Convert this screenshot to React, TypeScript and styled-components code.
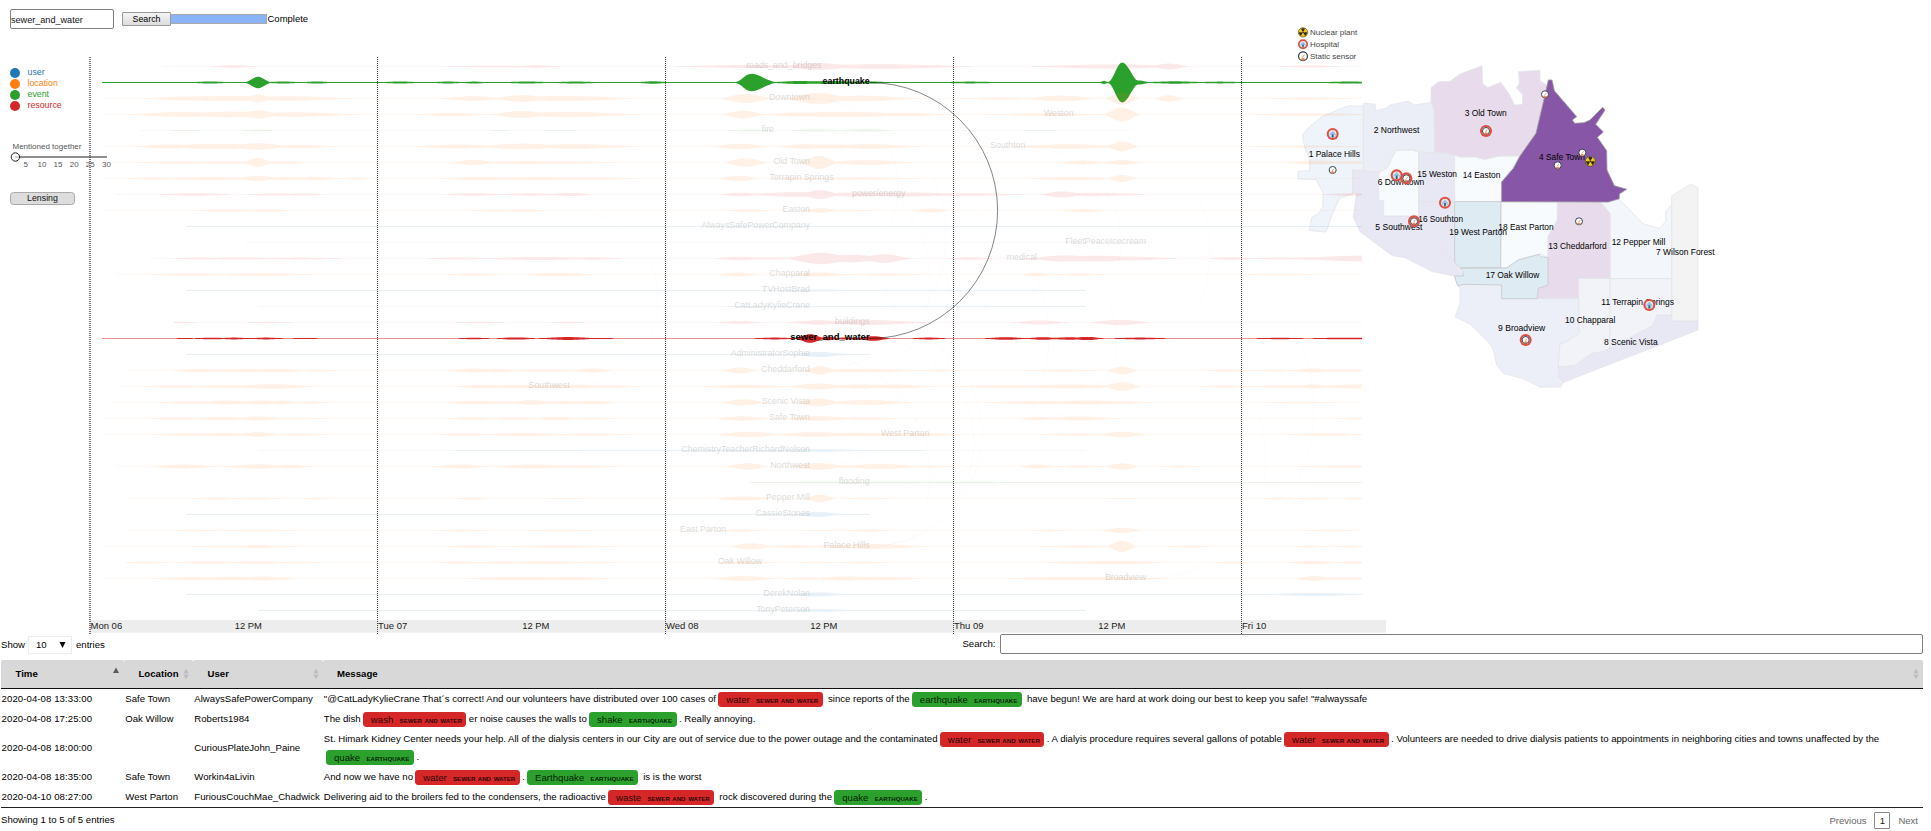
import React from "react";
import styled, { createGlobalStyle } from "styled-components";

const USER = "#1f77b4";
const LOCATION = "#ff7f0e";
const EVENT = "#2ca02c";
const RESOURCE = "#d62728";

const GlobalStyle = createGlobalStyle`
  * { box-sizing: border-box; }
  body {
    margin: 0;
    background: #fff;
    color: #000;
    font: 9.6px/1.2 "Liberation Sans", Arial, sans-serif;
    overflow: hidden;
  }
`;

const Page = styled.div`
  width: 1931px;
  height: 831px;
  display: flex;
  flex-direction: column;
`;

/* ---------- top bar ---------- */

const TopBar = styled.header`
  height: 32px;
  flex: none;
  display: flex;
  align-items: center;
  padding: 6px 0 0 10px;
`;

const QueryInput = styled.input`
  width: 104px;
  height: 20px;
  padding: 2px 0 0;
  border: 1px solid #808080;
  border-radius: 2px;
  font: 9.1px "Liberation Sans", Arial, sans-serif;
  color: #111;
`;

const SearchButton = styled.button`
  width: 49px;
  height: 14px;
  margin-left: 8px;
  padding: 0;
  border: 1px solid #999;
  border-radius: 1px;
  background: linear-gradient(#f4f4f4, #dcdcdc);
  font: 8.8px/10px "Liberation Sans", Arial, sans-serif;
  color: #000;
`;

const Progress = styled.div`
  width: 96px;
  height: 10px;
  border: 1px solid #a9a9a9;
  border-left: 0;
  background: #8ab3f8;
`;

const Status = styled.span`
  font-size: 9.5px;
  margin-left: 0.5px;
`;

/* ---------- stage ---------- */

const Stage = styled.main`
  height: 602px;
  flex: none;
  display: flex;
  align-items: flex-start;
`;

const Sidebar = styled.aside`
  width: 84px;
  flex: none;
  padding: 35px 0 0 10px;
  display: flex;
  flex-direction: column;
  align-items: flex-start;
  position: relative;
  z-index: 2;
`;

const Legend = styled.ul`
  margin: 0;
  padding: 0;
  list-style: none;
`;

const LegendItem = styled.li<{ $color: string }>`
  display: flex;
  align-items: center;
  height: 11.15px;
  color: ${(p) => p.$color};
  font-size: 8.8px;
  line-height: 10px;
  span { margin-top: -2px; }
  &::before {
    content: "";
    width: 10px;
    height: 10px;
    margin-right: 7.5px;
    border-radius: 50%;
    background: ${(p) => p.$color};
  }
`;

const SliderTitle = styled.div`
  margin: 30px 0 0 2.5px;
  font-size: 8px;
  line-height: 9px;
  color: #555;
  white-space: nowrap;
`;

const SliderSvg = styled.svg`
  display: block;
  width: 104px;
  height: 20px;
`;

const LensingButton = styled.button`
  width: 65px;
  height: 13px;
  margin-top: 21px;
  padding: 0;
  border: 1px solid #aaa;
  border-radius: 3.5px;
  background: #ddd;
  font: 8.8px/10px "Liberation Sans", Arial, sans-serif;
  color: #111;
`;

const ChartSvg = styled.svg`
  display: block;
  flex: none;
  width: 1306px;
  height: 602px;
  position: relative;
  z-index: 1;
  font-size: 8.8px;
`;

const MapSvg = styled.svg`
  display: block;
  flex: none;
  width: 440px;
  height: 380px;
  margin: -12px 0 0 -110px;
  font-size: 25.6px;
`;

/* ---------- streams ---------- */

// [centre, half width left, half width right, amplitude]
type Bump = [number, number, number, number];
type Row = {
  name: string;
  kind: string;
  right: number;
  from: number;
  to: number;
  base?: number;
  labelWidth?: number;
  bumps: Bump[];
};

const b = (c: number, w: number, a: number): Bump => [c, w, w, a];

const rows: Row[] = [
  { name: "roads_and_bridges", kind: RESOURCE, right: 821.5, from: 162, to: 1362, bumps: [b(234, 14, 1), b(500, 40, 0.5), b(536, 16, 0.9), b(750, 50, 1.2), b(818, 40, 3), b(880, 60, 2), b(1110, 50, 1.8), b(1169, 12, 2.6), b(1310, 20, 0.8)] },
  { name: "earthquake", kind: EVENT, right: 869.6, labelWidth: 47, from: 102, to: 1362, base: 0.5, bumps: [b(210, 20, 0.5), b(258, 13, 5.2), b(283, 16, 0.6), b(317, 16, 0.5), b(400, 20, 0.5), b(448, 16, 0.5), b(474, 12, 0.5), b(527, 24, 0.5), b(576, 24, 0.5), b(653, 16, 0.7), [751, 16, 26, 8.2], b(800, 30, 1), b(830, 40, 1), b(870, 20, 0.5), b(970, 30, 0.4), b(1104, 4, 1.2), [1122, 14, 18, 19.5], b(1138, 12, 1.6), b(1175, 30, 0.7), b(1220, 24, 0.4), b(1350, 30, 0.5)] },
  { name: "Downtown", kind: LOCATION, right: 810, from: 102, to: 1362, bumps: [b(190, 30, 1.8), b(230, 50, 2.3), b(258, 14, 3.8), b(290, 40, 1.9), b(318, 16, 1), b(474, 22, 2), b(522, 30, 3), b(565, 40, 2.2), b(595, 22, 1.6), b(746, 24, 4.2), b(818, 32, 5.2), b(862, 36, 2.6), b(1000, 30, 0.8), b(1061, 24, 2.6), b(1122, 15, 5.8), b(1169, 14, 3), b(1310, 30, 0.7)] },
  { name: "Weston", kind: LOCATION, right: 1073.6, from: 102, to: 1362, bumps: [b(182, 34, 2.2), b(230, 40, 2.6), b(258, 20, 3.8), b(295, 40, 1.9), b(452, 22, 1.4), b(522, 30, 3.2), b(570, 40, 2.5), b(610, 20, 0.8), b(743, 20, 3.6), b(800, 25, 1.8), b(845, 50, 2.3), b(900, 30, 1.5), b(1045, 40, 1), b(1122, 17, 6.6), b(1310, 40, 1)] },
  { name: "fire", kind: EVENT, right: 774, from: 140, to: 1130, base: 0.1, bumps: [b(186, 20, 0.3), b(258, 14, 0.5), b(500, 20, 0.2), b(560, 20, 0.3), b(750, 20, 0.5), b(818, 20, 0.8), b(865, 20, 1), b(1040, 20, 0.3)] },
  { name: "Southton", kind: LOCATION, right: 1025.4, from: 102, to: 1362, bumps: [b(170, 24, 1.8), b(215, 40, 2.3), b(258, 30, 3), b(300, 24, 1.4), b(458, 30, 1.7), b(522, 30, 2.6), b(575, 40, 2), b(740, 18, 2.5), b(805, 20, 2), b(830, 30, 1.8), b(870, 34, 2), b(1070, 36, 2), b(1122, 15, 4.8), b(1305, 40, 0.6)] },
  { name: "Old Town", kind: LOCATION, right: 810, from: 102, to: 1362, bumps: [b(180, 30, 0.8), b(225, 30, 0.9), b(258, 14, 4.2), b(285, 14, 1), b(474, 14, 2.2), b(525, 30, 1.2), b(570, 30, 0.8), b(746, 20, 4), b(819, 18, 6.2), b(868, 30, 2), b(1083, 16, 1.6), b(1122, 14, 2), b(1315, 20, 1.8), b(1350, 14, 1)] },
  { name: "Terrapin Springs", kind: LOCATION, right: 833.6, from: 102, to: 1362, bumps: [b(155, 20, 0.8), b(210, 36, 1.2), b(258, 14, 2.2), b(285, 20, 1.2), b(317, 14, 1.4), b(355, 12, 0.7), b(480, 26, 1.4), b(540, 40, 1.2), b(595, 30, 0.9), b(739, 14, 2.3), b(800, 20, 0.8), b(862, 40, 0.8), b(1072, 28, 1.4), b(1122, 14, 3.2)] },
  { name: "power/energy", kind: RESOURCE, right: 905.4, from: 115, to: 1362, bumps: [b(194, 24, 1), b(274, 20, 0.7), b(303, 14, 0.8), b(474, 20, 1), b(530, 20, 0.9), b(570, 14, 1.3), b(740, 14, 1.5), b(795, 34, 2), b(820, 20, 4), b(860, 36, 1.8), b(900, 50, 1.8), b(965, 40, 1), b(1062, 20, 2.8), b(1092, 30, 1.4), b(1122, 16, 0.8), b(1350, 16, 1)] },
  { name: "Easton", kind: LOCATION, right: 810, from: 102, to: 1362, base: 0.15, bumps: [b(228, 24, 1), b(269, 14, 1), b(495, 20, 0.7), b(523, 14, 1.1), b(747, 14, 1.1), b(821, 12, 2), b(850, 20, 0.5), b(931, 13, 1.8), b(1083, 16, 1.2)] },
  { name: "AlwaysSafePowerCompany", kind: USER, right: 810, from: 186, to: 1362, base: 0.5, bumps: [] },
  { name: "FleetPeaceIcecream", kind: USER, right: 1146, from: 246, to: 1146, base: 0.25, bumps: [] },
  { name: "medical", kind: RESOURCE, right: 1037, from: 150, to: 1362, bumps: [b(200, 18, 0.7), b(240, 30, 0.8), b(300, 30, 0.6), b(458, 20, 0.8), b(540, 40, 1.2), b(593, 20, 0.9), b(740, 16, 1.5), b(770, 20, 0.8), b(821, 34, 5.4), b(852, 36, 3.4), b(884, 26, 4), b(970, 14, 1), b(1065, 36, 2.8), b(1096, 36, 2.6), b(1130, 30, 1.6), b(1231, 14, 1), b(1280, 20, 0.7), b(1315, 20, 1), [1362, 45, 20, 2.6]] },
  { name: "Chapparal", kind: LOCATION, right: 810, from: 115, to: 1362, base: 0.15, bumps: [b(190, 30, 1), b(258, 40, 1), b(474, 20, 0.9), b(558, 24, 1.6), b(739, 14, 1.7), b(818, 20, 1.8), b(885, 30, 0.8), b(1036, 10, 1.5), b(1080, 20, 0.8), b(1280, 30, 0.6)] },
  { name: "TVHostBrad", kind: USER, right: 810, from: 186, to: 1086, base: 0.3, bumps: [b(818, 18, 0.7), b(960, 130, 0.3)] },
  { name: "CatLadyKylieCrane", kind: USER, right: 810, from: 258, to: 1086, base: 0.25, bumps: [b(940, 150, 0.3)] },
  { name: "buildings", kind: RESOURCE, right: 869.6, from: 174, to: 1362, base: 0.15, bumps: [b(178, 14, 0.5), b(270, 20, 0.4), b(480, 20, 0.5), b(567, 14, 0.5), b(740, 16, 1), b(818, 20, 2), b(868, 40, 2.2), b(1040, 18, 1.8), b(1120, 20, 2.3)] },
  { name: "sewer_and_water", kind: RESOURCE, right: 869.6, labelWidth: 79.3, from: 102, to: 1362, base: 0.32, bumps: [b(185, 10, 0.3), b(212, 22, 0.5), b(234, 18, 0.6), b(266, 20, 0.6), b(305, 16, 0.3), b(474, 18, 0.5), b(516, 22, 0.8), b(568, 34, 1.1), b(605, 10, 0.3), b(775, 26, 0.6), b(810, 16, 4), b(828, 12, 1.4), b(850, 24, 0.8), b(873, 18, 2), b(929, 20, 0.6), b(1006, 24, 1), b(1043, 18, 1), b(1070, 26, 0.9), b(1087, 18, 1.3), b(1140, 30, 0.6), b(1280, 30, 0.4), b(1345, 40, 0.5)] },
  { name: "AdministratorSophie", kind: USER, right: 810, from: 186, to: 870, base: 0.5, bumps: [b(820, 16, 2)] },
  { name: "Cheddarford", kind: LOCATION, right: 810, from: 126, to: 1362, base: 0.15, bumps: [b(198, 20, 1.3), b(245, 34, 1.2), b(275, 22, 1.6), b(317, 14, 0.8), b(474, 20, 1.7), b(499, 14, 1.6), b(545, 30, 1), b(593, 14, 1.7), b(740, 18, 2.8), b(820, 16, 4), b(860, 44, 1.4), b(940, 16, 0.7), b(1060, 30, 0.7), b(1122, 14, 4), b(1228, 16, 0.9), b(1275, 20, 0.7), b(1314, 14, 1.8), b(1345, 20, 0.9)] },
  { name: "Southwest", kind: LOCATION, right: 569.6, from: 118, to: 1362, base: 0.15, bumps: [b(175, 22, 1), b(225, 30, 1.1), b(271, 30, 2), b(485, 20, 1.5), b(515, 30, 1.4), b(570, 40, 1.6), b(615, 16, 1), b(745, 30, 1.5), b(818, 28, 2.8), b(860, 34, 1.7), b(895, 26, 1.7), b(1010, 40, 1.1), b(1070, 40, 1.8), b(1122, 18, 4), b(1225, 18, 0.8), b(1290, 30, 1), b(1314, 14, 1.8), [1362, 40, 9, 1.9]] },
  { name: "Scenic Vista", kind: LOCATION, right: 810, from: 112, to: 1362, base: 0.15, bumps: [b(190, 24, 1), b(226, 18, 1.7), b(262, 16, 1.8), b(281, 12, 1.7), b(310, 14, 0.8), b(474, 20, 1.6), b(500, 20, 1), b(531, 18, 2), b(565, 16, 1.2), b(593, 18, 1.5), b(743, 22, 2.9), b(818, 22, 3.8), b(868, 30, 2.2), b(1040, 40, 1.3), b(1090, 40, 1.7), b(1125, 20, 1), b(1300, 30, 0.5)] },
  { name: "Safe Town", kind: LOCATION, right: 810, from: 102, to: 1362, base: 0.15, bumps: [b(175, 20, 1), b(222, 24, 1.4), b(258, 20, 1.8), b(300, 20, 0.6), b(474, 20, 1.1), b(515, 20, 1), b(556, 16, 1.6), b(590, 20, 0.7), b(742, 18, 1.9), b(819, 26, 2), b(868, 22, 1.1), b(1037, 12, 1.5), b(1079, 26, 1.8), b(1355, 12, 0.8)] },
  { name: "West Parton", kind: LOCATION, right: 929.3, from: 102, to: 1362, base: 0.15, bumps: [b(185, 24, 1), b(225, 24, 1.3), b(258, 16, 2), b(300, 20, 0.8), b(465, 20, 0.9), b(525, 30, 1.4), b(590, 30, 0.8), b(749, 22, 2.5), b(815, 30, 2.1), b(860, 40, 1.6), b(920, 30, 1.3), b(1075, 26, 0.9), b(1122, 16, 2.5), b(1325, 30, 1)] },
  { name: "ChemistryTeacherRichardNelson", kind: USER, right: 810, from: 258, to: 1086, base: 0.25, bumps: [b(690, 160, 0.4), b(818, 30, 1)] },
  { name: "Northwest", kind: LOCATION, right: 810, from: 115, to: 1362, base: 0.15, bumps: [b(182, 24, 1.7), b(258, 24, 1.9), b(291, 14, 1.6), b(461, 18, 1.8), b(535, 30, 1.8), b(580, 30, 1), b(747, 20, 3), b(818, 26, 3.2), b(880, 28, 2.4), b(845, 30, 1), b(930, 20, 0.7), b(1037, 12, 1.8), b(1080, 20, 0.8), b(1122, 16, 3), b(1180, 14, 0.7), b(1350, 40, 0.8)] },
  { name: "flooding", kind: EVENT, right: 869.6, from: 750, to: 1362, base: 0.3, bumps: [b(822, 26, 0.4), b(930, 90, 0.35)] },
  { name: "Pepper Mill", kind: LOCATION, right: 810, from: 126, to: 1362, base: 0.12, bumps: [b(218, 20, 0.8), b(258, 20, 0.8), b(317, 12, 0.7), b(474, 14, 0.9), b(565, 18, 0.4), b(743, 20, 1.9), b(820, 15, 3.6), b(868, 20, 0.5), b(1122, 16, 0.4), b(1278, 12, 0.8), b(1314, 14, 0.8), b(1355, 10, 0.8)] },
  { name: "CassieStones", kind: USER, right: 810, from: 186, to: 870, base: 0.5, bumps: [b(818, 14, 1.8)] },
  { name: "East Parton", kind: LOCATION, right: 726, from: 126, to: 1362, base: 0.12, bumps: [b(195, 20, 0.5), b(258, 30, 0.6), b(460, 20, 0.7), b(560, 30, 0.5), b(740, 16, 0.9), b(818, 16, 0.4), b(868, 18, 0.8), b(1050, 14, 0.7), b(1122, 15, 2.4), b(1330, 20, 0.6)] },
  { name: "Palace Hills", kind: LOCATION, right: 869.6, from: 102, to: 1362, base: 0.14, bumps: [b(225, 30, 0.6), b(258, 16, 1.4), b(280, 16, 0.5), b(474, 20, 1), b(560, 40, 0.9), b(751, 22, 2.8), b(795, 20, 1.3), b(835, 20, 1), b(872, 36, 2.2), b(900, 18, 0.8), b(1080, 30, 0.8), b(1122, 14, 5.4), b(1190, 16, 0.8), b(1310, 14, 0.7), b(1350, 14, 0.7)] },
  { name: "Oak Willow", kind: LOCATION, right: 762, from: 126, to: 1362, base: 0.14, bumps: [b(145, 16, 0.7), b(208, 24, 1), b(260, 20, 1.1), b(300, 20, 0.6), b(460, 18, 0.9), b(500, 14, 1), b(545, 30, 1.1), b(595, 16, 0.6), b(745, 20, 1.2), b(818, 16, 0.5), b(862, 18, 0.7), b(1070, 20, 0.8), b(1115, 34, 1.5), b(1232, 14, 0.8), b(1314, 18, 1.4), b(1355, 12, 0.9)] },
  { name: "Broadview", kind: LOCATION, right: 1146, from: 102, to: 1362, base: 0.14, bumps: [b(190, 26, 1.3), b(230, 30, 1.6), b(262, 18, 1.8), b(283, 10, 1.2), b(510, 30, 1.5), b(535, 24, 1.4), b(572, 26, 1.4), b(743, 22, 2.2), b(805, 18, 0.9), b(845, 24, 1.8), b(880, 28, 1.5), b(1065, 40, 1.4), b(1110, 40, 1.6), b(1314, 12, 2.3), b(1338, 12, 1), b(1357, 10, 0.9)] },
  { name: "DerekNolan", kind: USER, right: 810, from: 186, to: 1362, base: 0.4, bumps: [b(818, 16, 1.6), b(1314, 30, 1)] },
  { name: "TonyPeterson", kind: USER, right: 810, from: 258, to: 1086, base: 0.4, bumps: [b(818, 20, 0.9)] },
];

const highlighted = new Set(["earthquake", "sewer_and_water"]);

const FIRST_ROW = 66.5;
const ROW_STEP = 16;
const rowY = (i: number) => FIRST_ROW + i * ROW_STEP;

function streamPath(row: Row, y: number) {
  const solid = highlighted.has(row.name);
  const base = (row.base ?? 0.2) + (solid ? 0 : 0.1);
  const xs: number[] = [];
  for (let x = row.from; x < row.to; x += 2) xs.push(x);
  xs.push(row.to);
  const half = xs.map((x) => {
    let peak = 0;
    for (const [c, l, r, a] of row.bumps) {
      // low swells spread out into their neighbours, tall peaks stay narrow
      const spread = solid ? 1 : a < 2.7 ? 1.75 : 1.2;
      const w = (x < c ? l : r) * spread;
      const t = Math.abs(x - c) / w;
      if (t < 1) peak = Math.max(peak, a * 0.5 * (1 + Math.cos(Math.PI * t)));
    }
    return base + peak;
  });
  const upper = xs.map((x, i) => `${x},${(y - half[i]).toFixed(2)}`);
  const lower = xs.map((x, i) => `${x},${(y + half[i]).toFixed(2)}`).reverse();
  return `M${upper.join("L")}L${lower.join("L")}Z`;
}

const days = [
  { x: 90, label: "Mon 06" },
  { x: 377.5, label: "Tue 07" },
  { x: 665.5, label: "Wed 08" },
  { x: 953.5, label: "Thu 09" },
  { x: 1241.5, label: "Fri 10" },
];

// [x, first row, last row] of the links between entities mentioned together
const faintLinks: [number, number, number][] = [
  [810, 2, 13], [810, 2, 19], [810, 6, 21], [810, 7, 25], [870, 16, 30], [834, 7, 22],
  [905, 8, 26], [1037, 12, 22], [1074, 3, 20], [1146, 11, 32], [570, 9, 20], [1025, 5, 17],
  [810, 18, 33], [870, 17, 30], [1146, 17, 32],
];

function StreamChart() {
  return (
    <ChartSvg viewBox="84 32 1306 602">
      <rect x={90} y={620} width={1296} height={12.6} fill="#ededed" />
      {days.map((d, i) => (
        <line key={d.label} x1={d.x} x2={d.x} y1={57} y2={634} stroke={i ? "#444" : "#777"} strokeWidth={i ? 1 : 2} strokeDasharray="1 1" />
      ))}
      {faintLinks.map(([x, from, to], i) => {
        const r = ((to - from) * ROW_STEP) / 2;
        return <path key={i} d={`M${x},${rowY(from)}A${r},${r} 0 0 1 ${x},${rowY(to)}`} fill="none" stroke="#000" opacity={0.014} />;
      })}
      {rows.map((row, i) => (
        <path key={row.name} d={streamPath(row, rowY(i))} fill={row.kind} opacity={highlighted.has(row.name) ? 1 : 0.105} />
      ))}
      <path d="M869.6,82.5A128,128 0 0 1 869.6,338.5" fill="none" stroke="#000" strokeOpacity={0.48} />
      {rows.map((row, i) => {
        const on = highlighted.has(row.name);
        const label = row.labelWidth
          ? { x: row.right - row.labelWidth, textLength: row.labelWidth, lengthAdjust: "spacingAndGlyphs" as const }
          : { x: row.right, textAnchor: "end" as const };
        return (
          <text key={row.name} {...label} y={rowY(i) + 1.6} fontWeight={on ? 700 : 400} fill="#000" opacity={on ? 1 : 0.14}>
            {row.name}
          </text>
        );
      })}
      <g fontSize={9.5} fill="#222">
        {days.map((d) => (
          <text key={d.label} x={d.x + 0.5} y={629}>{d.label}</text>
        ))}
        {days.slice(0, 4).map((d) => (
          <text key={d.label} x={d.x + 144.7} y={629} fontSize={9.4}>12 PM</text>
        ))}
      </g>
    </ChartSvg>
  );
}

/* ---------- map ---------- */

const districts: { fill: string; points: string; stroke?: string }[] = [
  { fill: "#eff3fa", points: "250,258 205,258 185,265 125,290 88,320 67,345 75,385 90,420 88,453 54,453 54,477 108,479 130,520 128,560 116,580 95,592 88,632 138,636 158,580 178,535 218,522 218,450 250,450" },
  { fill: "#ebeef7", points: "250,258 252,250 285,252 287,272 318,265 330,255 385,243 402,255 455,247 462,270 464,397 430,397 395,390 350,392 340,405 332,430 305,457 250,455" },
  { fill: "#e8e7f4", points: "218,450 305,457 296,460 296,540 311,542 311,588 416,588 430,615 524,727 550,768 523,768 458,755 375,713 337,707 240,635 220,590 230,520 218,518" },
  { fill: "#f7fbfd", points: "340,405 350,392 395,390 416,397 416,588 311,588 311,542 296,540 296,460 325,440" },
  { fill: "#e8e7f4", points: "416,398 464,398 524,403 524,545 416,545" },
  { fill: "#e8e7f4", points: "416,545 524,545 524,727 430,615 416,590" },
  { fill: "#e8dcec", points: "453,203 476,185 510,184 540,162 606,137 608,190 623,203 662,187 686,220 704,255 728,253 728,225 710,203 718,190 716,155 780,151 780,182 800,195 795,225 768,340 718,408 655,409 614,419 585,411 540,412 500,400 464,397 462,270 453,245" },
  { fill: "#f7fbfd", points: "524,405 540,412 585,411 614,419 655,409 720,408 665,486 663,545 524,545" },
  { fill: "#f3f3f3", points: "1175,528 1232,492 1254,503 1254,903 1175,903" },
  { fill: "#f3f6fb", points: "962,546 1018,538 1090,612 1138,625 1157,605 1157,575 1175,553 1175,776 990,776 990,580" },
  { fill: "#f7fbfd", points: "665,546 832,546 832,600 804,650 804,713 780,702 715,718 680,743 662,743" },
  { fill: "#e8dcec", points: "832,546 960,546 990,580 990,776 896,776 896,836 772,836 775,805 804,795 804,650 832,600" },
  { fill: "#eceff8", points: "523,768 533,797 552,791 665,795 665,836 896,836 897,940 865,962 840,972 835,1040 850,1087 842,1101 780,1101 735,1078 670,1060 650,1035 640,990 630,972 570,912 525,890 540,850 540,810" },
  { fill: "#e8e7f4", points: "835,1040 883,1037 935,1000 965,995 1120,915 1130,885 1175,885 1175,903 1254,903 1254,930 850,1087 835,1070" },
  { fill: "#f1f3f9", points: "896,776 990,776 990,985 965,995 935,1000 883,1037 835,1040 840,972 865,962 897,940" },
  { fill: "#f1f3f9", points: "990,776 1175,776 1175,885 1130,885 1120,915 990,985" },
  { fill: "#dfebf3", stroke: "#c4c8cc", points: "524,545 662,545 662,743 540,743 524,727" },
  { fill: "#dfebf3", stroke: "#c4c8cc", points: "540,745 680,744 715,720 778,703 782,710 804,713 804,795 775,805 772,836 665,836 665,795 552,793 533,797 523,768 550,768 548,755" },
  { fill: "#8856a7", stroke: "#999", points: "805,180 816,180 823,212 890,290 877,300 884,310 912,308 930,300 968,262 975,270 947,313 970,336 952,352 980,392 981,450 1003,497 1040,508 1018,522 1018,536 985,546 665,545 665,486 700,445 720,408 768,340 795,225" },
];

// [name, left, baseline, right]
const districtLabels: [string, number, number, number][] = [
  ["1 Palace Hills", 86, 411, 240],
  ["2 Northwest", 281, 339, 418],
  ["3 Old Town", 554, 288, 680],
  ["4 Safe Town", 777, 420, 915],
  ["5 Southwest", 286, 630, 427],
  ["6 Downtown", 293, 495, 433],
  ["7 Wilson Forest", 1128, 705, 1304],
  ["8 Scenic Vista", 972, 975, 1133],
  ["9 Broadview", 654, 933, 796],
  ["10 Chapparal", 855, 909, 1006],
  ["11 Terrapin Springs", 964, 855, 1182],
  ["12 Pepper Mill", 995, 675, 1156],
  ["13 Cheddarford", 805, 687, 980],
  ["14 Easton", 548, 474, 661],
  ["15 Weston", 412, 471, 531],
  ["16 Southton", 415, 606, 549],
  ["17 Oak Willow", 617, 774, 778],
  ["18 East Parton", 655, 630, 821],
  ["19 West Parton", 508, 645, 681],
];

const Hospital = ({ x, y, r = 18 }: { x: number; y: number; r?: number }) => (
  <g transform={`translate(${x} ${y}) scale(${r / 18})`}>
    <circle r={18} fill="#dd4f40" />
    <circle r={11.8} fill="#e4e6ea" />
    <path d="M-9,0 L0,-9 L9,0 V8 H-9Z" fill="#8cc3e6" />
    <path d="M-2.6,1 H2.6 V11 H-2.6Z" fill="#4a5c70" />
    <path d="M-7,2 H-4 V7 H-7Z M4,2 H7 V7 H4Z" fill="#e6f1f8" />
  </g>
);

const Sensor = ({ x, y, r = 12 }: { x: number; y: number; r?: number }) => (
  <g transform={`translate(${x} ${y}) scale(${r / 12})`}>
    <circle r={10.6} fill="#fff" stroke="#2f3d48" strokeWidth={2.8} />
    <path d="M-6,7.5 A9,9 0 0 0 6,7.5 L2,4 H-2Z" fill="#f0895c" />
    <path d="M-2,3 L4,-4" stroke="#e8764a" strokeWidth={2.2} />
  </g>
);

const Nuclear = ({ x, y, r = 16 }: { x: number; y: number; r?: number }) => (
  <g transform={`translate(${x} ${y}) scale(${r / 16})`}>
    <circle r={15} fill="#f4c820" stroke="#4a4020" strokeWidth={2} />
    {[60, 180, 300].map((a) => (
      <path key={a} transform={`rotate(${a})`} d="M0,0 L-6.5,11.5 A13,13 0 0 0 6.5,11.5Z" fill="#2c2818" />
    ))}
    <circle r={3.4} fill="#2c2818" stroke="#f4c820" strokeWidth={1.4} />
  </g>
);

const hospitals = [[158, 342], [618, 333], [350, 466], [379, 475], [495, 548], [402, 604], [1108, 855], [737, 960]];
const sensors = [[158, 450], [618, 333], [795, 223], [907, 398], [833, 436], [897, 604], [379, 475], [402, 604], [737, 960]];

function CityMap() {
  return (
    <MapSvg viewBox="0 0 1320 1140">
      {districts.map((d, i) => (
        <polygon key={i} points={d.points} fill={d.fill} stroke={d.stroke ?? "#e3e4ea"} strokeWidth={2.4} strokeLinejoin="round" />
      ))}
      {districtLabels.map(([name, x, y, right]) => (
        <text key={name} x={x} y={y} textLength={right - x} lengthAdjust="spacingAndGlyphs">{name}</text>
      ))}
      {hospitals.map(([x, y]) => <Hospital key={`${x}`} x={x} y={y} />)}
      {sensors.map(([x, y]) => <Sensor key={`${x}-${y}`} x={x} y={y} />)}
      <Nuclear x={931} y={424} />
      <Nuclear x={69} y={37} r={15} />
      <Hospital x={69} y={73} r={15} />
      <Sensor x={69} y={109} r={15} />
      <g fontSize={24} fill="#444">
        <text x={90} y={45}>Nuclear plant</text>
        <text x={90} y={81}>Hospital</text>
        <text x={90} y={117}>Static sensor</text>
      </g>
    </MapSvg>
  );
}

/* ---------- messages table ---------- */

const Controls = styled.div`
  height: 26px;
  flex: none;
  display: flex;
  align-items: flex-start;
  justify-content: space-between;
  padding: 0 8px 0 1px;
`;

const LengthControl = styled.label`
  display: flex;
  align-items: center;
  margin-top: 2px;
`;

const LengthSelect = styled.span`
  width: 44px;
  height: 18px;
  margin: 0 4px 0 3px;
  padding: 0 5px 0 7px;
  border: 1px solid #eee;
  display: flex;
  align-items: center;
  justify-content: space-between;
`;

const FilterControl = styled.label`
  display: flex;
  align-items: center;
  gap: 4.5px;
`;

const FilterInput = styled.input`
  width: 923px;
  height: 20px;
  padding: 0 4px;
  border: 1px solid #808080;
  border-radius: 2px;
`;

const Table = styled.table`
  width: 1922px;
  margin-left: 1px;
  table-layout: fixed;
  border-collapse: separate;
  border-spacing: 0;
  border-bottom: 1px solid #222;
  font-size: 9.62px;
`;

const HeadCell = styled.th`
  height: 29px;
  padding: 0 0 0 14.5px;
  text-align: left;
  background: #d8d8d8;
  border-bottom: 1px solid #111;
  border-radius: 2px 2px 0 0;
`;

const HeadInner = styled.div`
  display: flex;
  align-items: center;
  justify-content: space-between;
  padding-right: 4px;
`;

const Cell = styled.td`
  padding: 1px 0 1px 1.3px;
  line-height: 18px;
  height: 20px;
  vertical-align: middle;
  white-space: nowrap;
`;

const TimeCell = styled(Cell)`
  padding-left: 0.6px;
  letter-spacing: 0.07px;
`;

const MessageCell = styled(Cell)`
  white-space: normal;
`;

const Entity = styled.mark<{ $color: string }>`
  display: inline-flex;
  align-items: center;
  height: 15px;
  margin: 0 2.4px;
  padding: 0 4.6px 0 7.8px;
  border-radius: 3.4px;
  background: ${(p) => p.$color};
  color: rgba(0, 0, 0, 0.85);
  line-height: 15px;
  vertical-align: middle;
`;

const EntityTag = styled.b`
  margin-left: 6.3px;
  padding-top: 2px;
  font-size: 6.1px;
  word-spacing: 1px;
  text-transform: uppercase;
  white-space: nowrap;
`;

const Water = ({ children }: { children: React.ReactNode }) => (
  <Entity $color={RESOURCE}>{children}<EntityTag>sewer and water</EntityTag></Entity>
);
const Quake = ({ children }: { children: React.ReactNode }) => (
  <Entity $color={EVENT}>{children}<EntityTag>earthquake</EntityTag></Entity>
);

const SortIcon = ({ active }: { active?: boolean }) =>
  active ? (
    <svg width="8" height="14" viewBox="0 0 8 14"><path d="M1 6 L4 0.5 L7 6Z" fill="#555b60" /></svg>
  ) : (
    <svg width="6" height="12" viewBox="0 0 6 12"><path d="M0.3 5.4 L3 0.6 L5.7 5.4Z M0.3 6.6 L3 11.4 L5.7 6.6Z" fill="#bcbec2" /></svg>
  );

const Footer = styled.footer`
  display: flex;
  align-items: center;
  justify-content: space-between;
  padding: 4px 13px 0 1px;
`;

const Info = styled.span`
  margin-top: -1px;
`;

const Pager = styled.nav`
  display: flex;
  align-items: center;
  gap: 8px;
  color: #666;
  font-size: 9.5px;
`;

const PageNumber = styled.span`
  width: 16px;
  height: 17px;
  border: 1px solid #8a8a8a;
  border-radius: 1px;
  color: #222;
  text-align: center;
  line-height: 15px;
`;

const messages = [
  { time: "2020-04-08 13:33:00", place: "Safe Town", user: "AlwaysSafePowerCompany", body: <>"@CatLadyKylieCrane That´s correct! And our volunteers have distributed over 100 cases of<Water>water</Water> since reports of the<Quake>earthquake</Quake> have begun! We are hard at work doing our best to keep you safe! "#alwayssafe</> },
  { time: "2020-04-08 17:25:00", place: "Oak Willow", user: "Roberts1984", body: <>The dish<Water>wash</Water>er noise causes the walls to<Quake>shake</Quake>. Really annoying.</> },
  { time: "2020-04-08 18:00:00", place: "", user: "CuriousPlateJohn_Paine", body: <>St. Himark Kidney Center needs your help. All of the dialysis centers in our City are out of service due to the power outage and the contaminated<Water>water</Water>. A dialyis procedure requires several gallons of potable<Water>water</Water>. Volunteers are needed to drive dialysis patients to appointments in neighboring cities and towns unaffected by the <Quake>quake</Quake>.</> },
  { time: "2020-04-08 18:35:00", place: "Safe Town", user: "Workin4aLivin", body: <>And now we have no<Water>water</Water>.<Quake>Earthquake</Quake> is is the worst</> },
  { time: "2020-04-10 08:27:00", place: "West Parton", user: "FuriousCouchMae_Chadwick", body: <>Delivering aid to the broilers fed to the condensers, the radioactive<Water>waste</Water> rock discovered during the<Quake>quake</Quake>.</> },
];

export default function App() {
  return (
    <Page>
      <GlobalStyle />
      <TopBar>
        <QueryInput defaultValue="sewer_and_water" />
        <SearchButton>Search</SearchButton>
        <Progress />
        <Status>Complete</Status>
      </TopBar>

      <Stage>
        <Sidebar>
          <Legend>
            <LegendItem $color={USER}><span>user</span></LegendItem>
            <LegendItem $color={LOCATION}><span>location</span></LegendItem>
            <LegendItem $color={EVENT}><span>event</span></LegendItem>
            <LegendItem $color={RESOURCE}><span>resource</span></LegendItem>
          </Legend>
          <SliderTitle>Mentioned together</SliderTitle>
          <SliderSvg viewBox="10 151 104 20">
            <line x1={15} x2={107} y1={157} y2={157} stroke="#222" strokeWidth={1.2} />
            <circle cx={15.4} cy={157} r={4.2} fill="#fff" fillOpacity={0.6} stroke="#222" />
            {[5, 10, 15, 20, 25, 30].map((n, i) => (
              <text key={n} x={25.8 + i * 16.12} y={167} textAnchor="middle" fontSize={8} fill="#555">{n}</text>
            ))}
          </SliderSvg>
          <LensingButton>Lensing</LensingButton>
        </Sidebar>
        <StreamChart />
        <CityMap />
      </Stage>

      <Controls>
        <LengthControl>
          Show
          <LengthSelect>
            10
            <svg width="7" height="8" viewBox="0 0 8 8"><path d="M0.6 0.5 H7.4 L4 7.5Z" /></svg>
          </LengthSelect>
          entries
        </LengthControl>
        <FilterControl>
          Search:
          <FilterInput />
        </FilterControl>
      </Controls>

      <Table>
        <colgroup>
          <col style={{ width: 123 }} />
          <col style={{ width: 69 }} />
          <col style={{ width: 129.5 }} />
          <col />
        </colgroup>
        <thead>
          <tr>
            {["Time", "Location", "User", "Message"].map((title, i) => (
              <HeadCell key={title}>
                <HeadInner>{title}<SortIcon active={i === 0} /></HeadInner>
              </HeadCell>
            ))}
          </tr>
        </thead>
        <tbody>
          {messages.map((m) => (
            <tr key={m.time}>
              <TimeCell>{m.time}</TimeCell>
              <Cell>{m.place}</Cell>
              <Cell>{m.user}</Cell>
              <MessageCell>{m.body}</MessageCell>
            </tr>
          ))}
        </tbody>
      </Table>

      <Footer>
        <Info>Showing 1 to 5 of 5 entries</Info>
        <Pager>
          <span>Previous</span>
          <PageNumber>1</PageNumber>
          <span>Next</span>
        </Pager>
      </Footer>
    </Page>
  );
}
